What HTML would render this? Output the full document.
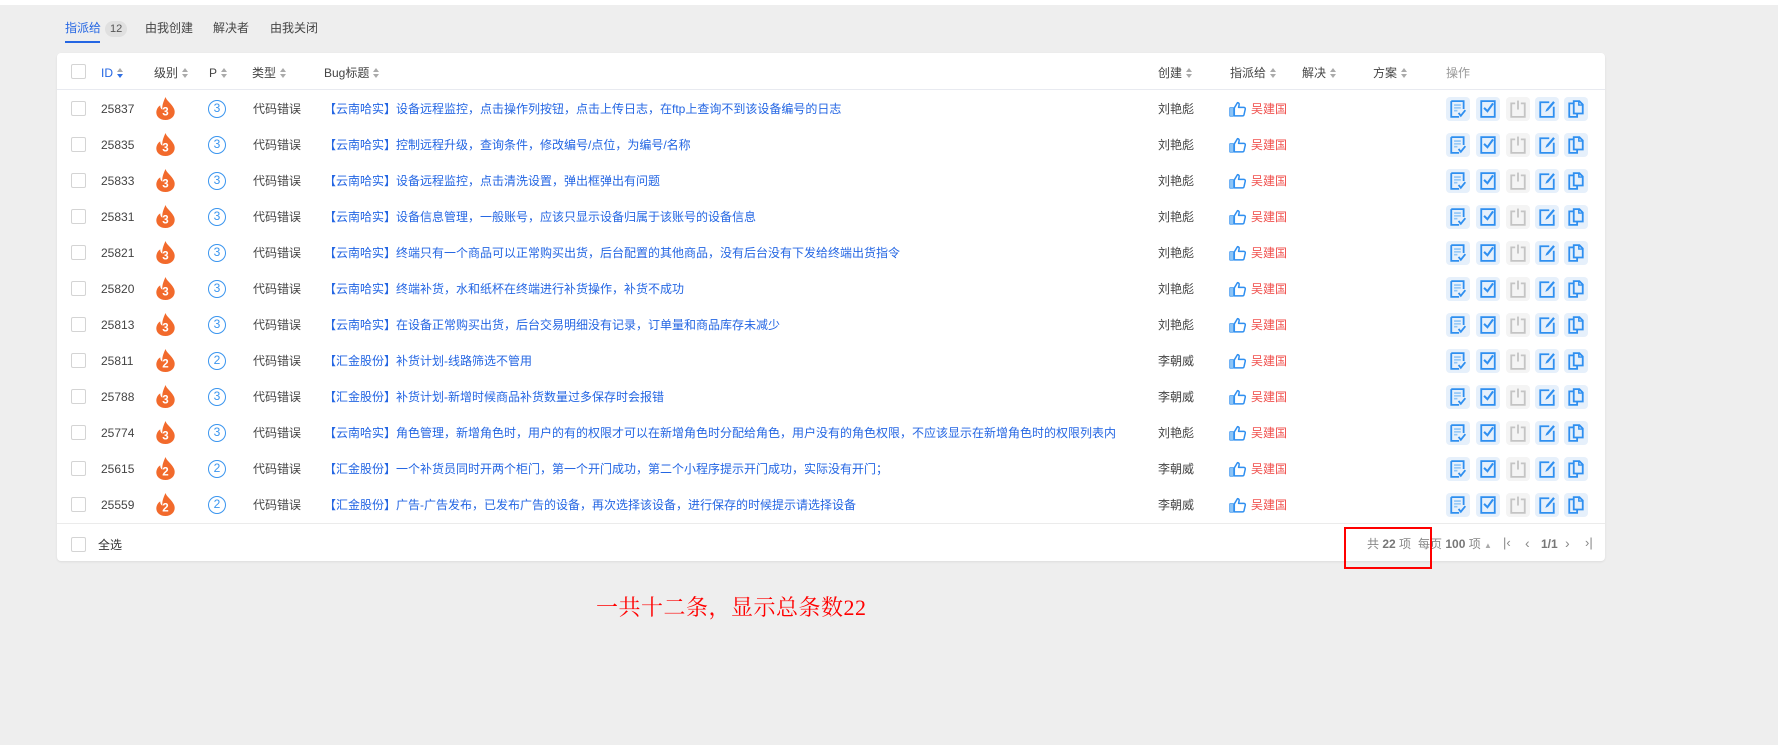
<!DOCTYPE html>
<html><head><meta charset="utf-8">
<style>
*{margin:0;padding:0;box-sizing:border-box}
body{width:1778px;height:745px;background:#eeeeee;font-family:"Liberation Sans","Noto Sans CJK SC",sans-serif;font-size:12px;color:#333;position:relative;overflow:hidden}
.topbar{position:absolute;left:0;top:0;width:1778px;height:5px;background:#fff}
.tabs{position:absolute;top:20px;left:65px;height:22px}
.tab{position:absolute;top:0;white-space:nowrap;font-size:12px;color:#444;line-height:16px}
.badge{display:inline-block;background:#e0e0e0;color:#555;border-radius:8px;padding:0 5px;font-size:11px;line-height:16px;margin-left:4px}
.card{position:absolute;left:57px;top:53px;width:1548px;height:508px;background:#fff;border-radius:4px;box-shadow:0 1px 2px rgba(0,0,0,.08)}
.hd{position:absolute;left:0;top:0;width:100%;height:37px;border-bottom:1px solid #e8eaf0}
.hd span{position:absolute;top:12px;font-size:12px;color:#444;white-space:nowrap;line-height:16px}
.sa{display:inline-block;width:7px;height:10px;margin-left:4px;vertical-align:-1px;position:relative}
.sa:before,.sa:after{content:"";position:absolute;left:0;border-left:3.5px solid transparent;border-right:3.5px solid transparent}
.sa:before{top:0;border-bottom:4px solid #aaa}
.sa:after{bottom:0;border-top:4px solid #aaa}
.sa.on:after{border-top-color:#2f6fe4}
.cb{position:absolute;width:15px;height:15px;border:1px solid #d4d4d4;border-radius:2px;background:#fff}
.r{position:absolute;left:0;width:100%;height:36px}
.r>*{position:absolute}
.id{left:44px;top:11px;line-height:14px;color:#444}
.fl{left:98px;top:5px;width:21px;height:25px}
.pc{left:151px;top:9px;width:18px;height:18px;border:1.3px solid #3a95ef;border-radius:50%;color:#3a95ef;text-align:center;line-height:15px;font-size:12px}
.ty{left:196px;top:11px;line-height:14px;color:#444}
.ti{left:267px;top:11px;line-height:14px;color:#2466e3;white-space:nowrap}
.cr{left:1101px;top:11px;line-height:14px;color:#444}
.th{left:1172px;top:10px;width:17px;height:16px}
.nm{left:1194px;top:11px;line-height:14px;color:#f0504d}
.ic{top:6px;width:24px;height:24px;border-radius:4px;background:#e6f0fb}
.ic svg{position:absolute;left:4px;top:3px}
.ic.g{background:#f4f4f4}
.ft{position:absolute;left:0;top:470px;width:100%;border-top:1px solid #ebebeb;height:38px}
.pg{position:absolute;top:11px;color:#888;font-size:12px;white-space:nowrap;line-height:16px}
.pg b{color:#777}
.redbox{position:absolute;left:1344px;top:527px;width:88px;height:42px;border:2px solid #f00}
.note{position:absolute;left:596px;top:595px;font-family:"Liberation Serif","Noto Serif CJK SC",serif;font-size:22px;color:#f00;letter-spacing:0.5px;white-space:nowrap;line-height:26px}
</style></head><body>
<div class="topbar"></div>
<div class="tabs">
 <div class="tab" style="left:0;color:#2466e3">指派给<span class="badge">12</span></div>
 <div style="position:absolute;left:0;top:21px;width:35px;height:2px;background:#2466e3"></div>
 <div class="tab" style="left:80px">由我创建</div>
 <div class="tab" style="left:148px">解决者</div>
 <div class="tab" style="left:205px">由我关闭</div>
</div>
<svg width="0" height="0" style="position:absolute">
 <defs>
  <symbol id="flame" viewBox="0 0 20 23"><path d="M10 0.5C11 4 16 7 18 11.5C20.5 17 16.5 22.5 10 22.5C3.5 22.5 -0.5 17.5 2 12C3 9.5 5 8.5 5 8.5C5 11 6 12 7 12.5C6.5 8 8.5 4 10 0.5Z" fill="#f26a2c"/></symbol>
  <symbol id="thumb" viewBox="0 0 16 15"><path d="M1 6.5h3v7.5H1zM5 6.5L8 1.5c1.2 0 1.8 1 1.5 2.2L9 6h5c1 0 1.5.8 1.3 1.7l-1.2 5.3c-.2.7-.7 1-1.4 1H5z" fill="none" stroke="#2f8ff0" stroke-width="1.4" stroke-linejoin="round"/><rect x="1" y="6.5" width="3" height="7.5" fill="#8ec5f7"/></symbol>
  <symbol id="i1" viewBox="0 0 14 16"><path d="M1 1h11v7M1 1v14h7" fill="none" stroke="#2f8ff0" stroke-width="1.6"/><path d="M3.5 4.5h6M3.5 7h6M3.5 9.5h3" stroke="#8ec5f7" stroke-width="1.4"/><path d="M7.5 11.5l2 2.5 4-5" fill="none" stroke="#2f8ff0" stroke-width="1.6"/></symbol>
  <symbol id="i2" viewBox="0 0 14 16"><rect x="1" y="1" width="12" height="14" fill="none" stroke="#2f8ff0" stroke-width="1.6"/><path d="M3.5 7l3 3 5-7" fill="none" stroke="#2f8ff0" stroke-width="1.8"/></symbol>
  <symbol id="i3" viewBox="0 0 14 16"><path d="M4.5 3H1v12h12V3H9.5" fill="none" stroke="#c4c4c4" stroke-width="1.6"/><path d="M7 0.5v8" stroke="#c4c4c4" stroke-width="1.6"/></symbol>
  <symbol id="i4" viewBox="0 0 14 16"><path d="M9 2H1v13h12V6" fill="none" stroke="#2f8ff0" stroke-width="1.6"/><path d="M5.5 10.5l1-2.5 6-7 1.5 1.3-6 7z" fill="#2f8ff0"/></symbol>
  <symbol id="i5" viewBox="0 0 14 16"><path d="M5 3H1v12h7v-3" fill="none" stroke="#2f8ff0" stroke-width="1.6"/><path d="M5 1h5l3 3v8H5z" fill="none" stroke="#2f8ff0" stroke-width="1.6"/><path d="M9.5 1v3.5H13" fill="none" stroke="#2f8ff0" stroke-width="1.3"/></symbol>
 </defs>
</svg>
<div class="card">
 <div class="hd">
  <div class="cb" style="left:14px;top:11px"></div>
  <span style="left:44px;color:#2466e3">ID<i class="sa on"></i></span>
  <span style="left:97px">级别<i class="sa"></i></span>
  <span style="left:152px">P<i class="sa"></i></span>
  <span style="left:195px">类型<i class="sa"></i></span>
  <span style="left:267px">Bug标题<i class="sa"></i></span>
  <span style="left:1101px">创建<i class="sa"></i></span>
  <span style="left:1173px">指派给<i class="sa"></i></span>
  <span style="left:1245px">解决<i class="sa"></i></span>
  <span style="left:1316px">方案<i class="sa"></i></span>
  <span style="left:1389px;color:#999">操作</span>
 </div>

 <div class="r" style="top:38px"><div class="cb" style="left:14px;top:10px"></div><span class="id">25837</span><svg class="fl" viewBox="0 0 20 23"><use href="#flame"/><text x="10" y="18" text-anchor="middle" fill="#fff" font-size="11" font-weight="bold" font-family="Liberation Sans">3</text></svg><span class="pc">3</span><span class="ty">代码错误</span><span class="ti">【云南哈实】设备远程监控，点击操作列按钮，点击上传日志，在ftp上查询不到该设备编号的日志</span><span class="cr">刘艳彪</span><svg class="th"><use href="#thumb"/></svg><span class="nm">吴建国</span><div class="ic" style="left:1389px"><svg width="16" height="18"><use href="#i1"/></svg></div><div class="ic" style="left:1419px"><svg width="16" height="18"><use href="#i2"/></svg></div><div class="ic g" style="left:1449px"><svg width="16" height="18"><use href="#i3"/></svg></div><div class="ic" style="left:1478px"><svg width="16" height="18"><use href="#i4"/></svg></div><div class="ic" style="left:1507px"><svg width="16" height="18"><use href="#i5"/></svg></div></div>

 <div class="r" style="top:74px"><div class="cb" style="left:14px;top:10px"></div><span class="id">25835</span><svg class="fl" viewBox="0 0 20 23"><use href="#flame"/><text x="10" y="18" text-anchor="middle" fill="#fff" font-size="11" font-weight="bold" font-family="Liberation Sans">3</text></svg><span class="pc">3</span><span class="ty">代码错误</span><span class="ti">【云南哈实】控制远程升级，查询条件，修改编号/点位，为编号/名称</span><span class="cr">刘艳彪</span><svg class="th"><use href="#thumb"/></svg><span class="nm">吴建国</span><div class="ic" style="left:1389px"><svg width="16" height="18"><use href="#i1"/></svg></div><div class="ic" style="left:1419px"><svg width="16" height="18"><use href="#i2"/></svg></div><div class="ic g" style="left:1449px"><svg width="16" height="18"><use href="#i3"/></svg></div><div class="ic" style="left:1478px"><svg width="16" height="18"><use href="#i4"/></svg></div><div class="ic" style="left:1507px"><svg width="16" height="18"><use href="#i5"/></svg></div></div>

 <div class="r" style="top:110px"><div class="cb" style="left:14px;top:10px"></div><span class="id">25833</span><svg class="fl" viewBox="0 0 20 23"><use href="#flame"/><text x="10" y="18" text-anchor="middle" fill="#fff" font-size="11" font-weight="bold" font-family="Liberation Sans">3</text></svg><span class="pc">3</span><span class="ty">代码错误</span><span class="ti">【云南哈实】设备远程监控，点击清洗设置，弹出框弹出有问题</span><span class="cr">刘艳彪</span><svg class="th"><use href="#thumb"/></svg><span class="nm">吴建国</span><div class="ic" style="left:1389px"><svg width="16" height="18"><use href="#i1"/></svg></div><div class="ic" style="left:1419px"><svg width="16" height="18"><use href="#i2"/></svg></div><div class="ic g" style="left:1449px"><svg width="16" height="18"><use href="#i3"/></svg></div><div class="ic" style="left:1478px"><svg width="16" height="18"><use href="#i4"/></svg></div><div class="ic" style="left:1507px"><svg width="16" height="18"><use href="#i5"/></svg></div></div>

 <div class="r" style="top:146px"><div class="cb" style="left:14px;top:10px"></div><span class="id">25831</span><svg class="fl" viewBox="0 0 20 23"><use href="#flame"/><text x="10" y="18" text-anchor="middle" fill="#fff" font-size="11" font-weight="bold" font-family="Liberation Sans">3</text></svg><span class="pc">3</span><span class="ty">代码错误</span><span class="ti">【云南哈实】设备信息管理，一般账号，应该只显示设备归属于该账号的设备信息</span><span class="cr">刘艳彪</span><svg class="th"><use href="#thumb"/></svg><span class="nm">吴建国</span><div class="ic" style="left:1389px"><svg width="16" height="18"><use href="#i1"/></svg></div><div class="ic" style="left:1419px"><svg width="16" height="18"><use href="#i2"/></svg></div><div class="ic g" style="left:1449px"><svg width="16" height="18"><use href="#i3"/></svg></div><div class="ic" style="left:1478px"><svg width="16" height="18"><use href="#i4"/></svg></div><div class="ic" style="left:1507px"><svg width="16" height="18"><use href="#i5"/></svg></div></div>

 <div class="r" style="top:182px"><div class="cb" style="left:14px;top:10px"></div><span class="id">25821</span><svg class="fl" viewBox="0 0 20 23"><use href="#flame"/><text x="10" y="18" text-anchor="middle" fill="#fff" font-size="11" font-weight="bold" font-family="Liberation Sans">3</text></svg><span class="pc">3</span><span class="ty">代码错误</span><span class="ti">【云南哈实】终端只有一个商品可以正常购买出货，后台配置的其他商品，没有后台没有下发给终端出货指令</span><span class="cr">刘艳彪</span><svg class="th"><use href="#thumb"/></svg><span class="nm">吴建国</span><div class="ic" style="left:1389px"><svg width="16" height="18"><use href="#i1"/></svg></div><div class="ic" style="left:1419px"><svg width="16" height="18"><use href="#i2"/></svg></div><div class="ic g" style="left:1449px"><svg width="16" height="18"><use href="#i3"/></svg></div><div class="ic" style="left:1478px"><svg width="16" height="18"><use href="#i4"/></svg></div><div class="ic" style="left:1507px"><svg width="16" height="18"><use href="#i5"/></svg></div></div>

 <div class="r" style="top:218px"><div class="cb" style="left:14px;top:10px"></div><span class="id">25820</span><svg class="fl" viewBox="0 0 20 23"><use href="#flame"/><text x="10" y="18" text-anchor="middle" fill="#fff" font-size="11" font-weight="bold" font-family="Liberation Sans">3</text></svg><span class="pc">3</span><span class="ty">代码错误</span><span class="ti">【云南哈实】终端补货，水和纸杯在终端进行补货操作，补货不成功</span><span class="cr">刘艳彪</span><svg class="th"><use href="#thumb"/></svg><span class="nm">吴建国</span><div class="ic" style="left:1389px"><svg width="16" height="18"><use href="#i1"/></svg></div><div class="ic" style="left:1419px"><svg width="16" height="18"><use href="#i2"/></svg></div><div class="ic g" style="left:1449px"><svg width="16" height="18"><use href="#i3"/></svg></div><div class="ic" style="left:1478px"><svg width="16" height="18"><use href="#i4"/></svg></div><div class="ic" style="left:1507px"><svg width="16" height="18"><use href="#i5"/></svg></div></div>

 <div class="r" style="top:254px"><div class="cb" style="left:14px;top:10px"></div><span class="id">25813</span><svg class="fl" viewBox="0 0 20 23"><use href="#flame"/><text x="10" y="18" text-anchor="middle" fill="#fff" font-size="11" font-weight="bold" font-family="Liberation Sans">3</text></svg><span class="pc">3</span><span class="ty">代码错误</span><span class="ti">【云南哈实】在设备正常购买出货，后台交易明细没有记录，订单量和商品库存未减少</span><span class="cr">刘艳彪</span><svg class="th"><use href="#thumb"/></svg><span class="nm">吴建国</span><div class="ic" style="left:1389px"><svg width="16" height="18"><use href="#i1"/></svg></div><div class="ic" style="left:1419px"><svg width="16" height="18"><use href="#i2"/></svg></div><div class="ic g" style="left:1449px"><svg width="16" height="18"><use href="#i3"/></svg></div><div class="ic" style="left:1478px"><svg width="16" height="18"><use href="#i4"/></svg></div><div class="ic" style="left:1507px"><svg width="16" height="18"><use href="#i5"/></svg></div></div>

 <div class="r" style="top:290px"><div class="cb" style="left:14px;top:10px"></div><span class="id">25811</span><svg class="fl" viewBox="0 0 20 23"><use href="#flame"/><text x="10" y="18" text-anchor="middle" fill="#fff" font-size="11" font-weight="bold" font-family="Liberation Sans">2</text></svg><span class="pc">2</span><span class="ty">代码错误</span><span class="ti">【汇金股份】补货计划-线路筛选不管用</span><span class="cr">李朝威</span><svg class="th"><use href="#thumb"/></svg><span class="nm">吴建国</span><div class="ic" style="left:1389px"><svg width="16" height="18"><use href="#i1"/></svg></div><div class="ic" style="left:1419px"><svg width="16" height="18"><use href="#i2"/></svg></div><div class="ic g" style="left:1449px"><svg width="16" height="18"><use href="#i3"/></svg></div><div class="ic" style="left:1478px"><svg width="16" height="18"><use href="#i4"/></svg></div><div class="ic" style="left:1507px"><svg width="16" height="18"><use href="#i5"/></svg></div></div>

 <div class="r" style="top:326px"><div class="cb" style="left:14px;top:10px"></div><span class="id">25788</span><svg class="fl" viewBox="0 0 20 23"><use href="#flame"/><text x="10" y="18" text-anchor="middle" fill="#fff" font-size="11" font-weight="bold" font-family="Liberation Sans">3</text></svg><span class="pc">3</span><span class="ty">代码错误</span><span class="ti">【汇金股份】补货计划-新增时候商品补货数量过多保存时会报错</span><span class="cr">李朝威</span><svg class="th"><use href="#thumb"/></svg><span class="nm">吴建国</span><div class="ic" style="left:1389px"><svg width="16" height="18"><use href="#i1"/></svg></div><div class="ic" style="left:1419px"><svg width="16" height="18"><use href="#i2"/></svg></div><div class="ic g" style="left:1449px"><svg width="16" height="18"><use href="#i3"/></svg></div><div class="ic" style="left:1478px"><svg width="16" height="18"><use href="#i4"/></svg></div><div class="ic" style="left:1507px"><svg width="16" height="18"><use href="#i5"/></svg></div></div>

 <div class="r" style="top:362px"><div class="cb" style="left:14px;top:10px"></div><span class="id">25774</span><svg class="fl" viewBox="0 0 20 23"><use href="#flame"/><text x="10" y="18" text-anchor="middle" fill="#fff" font-size="11" font-weight="bold" font-family="Liberation Sans">3</text></svg><span class="pc">3</span><span class="ty">代码错误</span><span class="ti">【云南哈实】角色管理，新增角色时，用户的有的权限才可以在新增角色时分配给角色，用户没有的角色权限，不应该显示在新增角色时的权限列表内</span><span class="cr">刘艳彪</span><svg class="th"><use href="#thumb"/></svg><span class="nm">吴建国</span><div class="ic" style="left:1389px"><svg width="16" height="18"><use href="#i1"/></svg></div><div class="ic" style="left:1419px"><svg width="16" height="18"><use href="#i2"/></svg></div><div class="ic g" style="left:1449px"><svg width="16" height="18"><use href="#i3"/></svg></div><div class="ic" style="left:1478px"><svg width="16" height="18"><use href="#i4"/></svg></div><div class="ic" style="left:1507px"><svg width="16" height="18"><use href="#i5"/></svg></div></div>

 <div class="r" style="top:398px"><div class="cb" style="left:14px;top:10px"></div><span class="id">25615</span><svg class="fl" viewBox="0 0 20 23"><use href="#flame"/><text x="10" y="18" text-anchor="middle" fill="#fff" font-size="11" font-weight="bold" font-family="Liberation Sans">2</text></svg><span class="pc">2</span><span class="ty">代码错误</span><span class="ti">【汇金股份】一个补货员同时开两个柜门，第一个开门成功，第二个小程序提示开门成功，实际没有开门；</span><span class="cr">李朝威</span><svg class="th"><use href="#thumb"/></svg><span class="nm">吴建国</span><div class="ic" style="left:1389px"><svg width="16" height="18"><use href="#i1"/></svg></div><div class="ic" style="left:1419px"><svg width="16" height="18"><use href="#i2"/></svg></div><div class="ic g" style="left:1449px"><svg width="16" height="18"><use href="#i3"/></svg></div><div class="ic" style="left:1478px"><svg width="16" height="18"><use href="#i4"/></svg></div><div class="ic" style="left:1507px"><svg width="16" height="18"><use href="#i5"/></svg></div></div>

 <div class="r" style="top:434px"><div class="cb" style="left:14px;top:10px"></div><span class="id">25559</span><svg class="fl" viewBox="0 0 20 23"><use href="#flame"/><text x="10" y="18" text-anchor="middle" fill="#fff" font-size="11" font-weight="bold" font-family="Liberation Sans">2</text></svg><span class="pc">2</span><span class="ty">代码错误</span><span class="ti">【汇金股份】广告-广告发布，已发布广告的设备，再次选择该设备，进行保存的时候提示请选择设备</span><span class="cr">李朝威</span><svg class="th"><use href="#thumb"/></svg><span class="nm">吴建国</span><div class="ic" style="left:1389px"><svg width="16" height="18"><use href="#i1"/></svg></div><div class="ic" style="left:1419px"><svg width="16" height="18"><use href="#i2"/></svg></div><div class="ic g" style="left:1449px"><svg width="16" height="18"><use href="#i3"/></svg></div><div class="ic" style="left:1478px"><svg width="16" height="18"><use href="#i4"/></svg></div><div class="ic" style="left:1507px"><svg width="16" height="18"><use href="#i5"/></svg></div></div>

 <div class="ft">
  <div class="cb" style="left:14px;top:13px"></div>
  <span class="pg" style="left:41px;top:13px;color:#333">全选</span>
  <span class="pg" style="left:1310px;top:12px">共 <b>22</b> 项</span>
  <span class="pg" style="left:1361px;top:12px">每页 <b>100</b> 项 <span style="font-size:8px;color:#aaa">▲</span></span>
  <span class="pg" style="left:1446px;top:11px;font-size:13px;color:#888">|‹</span>
  <span class="pg" style="left:1468px;top:11px;font-size:14px;color:#888">‹</span>
  <span class="pg" style="left:1484px;top:12px"><b>1/1</b></span>
  <span class="pg" style="left:1508px;top:11px;font-size:14px;color:#888">›</span>
  <span class="pg" style="left:1528px;top:11px;font-size:13px;color:#888">›|</span>
 </div>
</div>
<div class="redbox"></div>
<div class="note">一共十二条，显示总条数22</div>
</body></html>
